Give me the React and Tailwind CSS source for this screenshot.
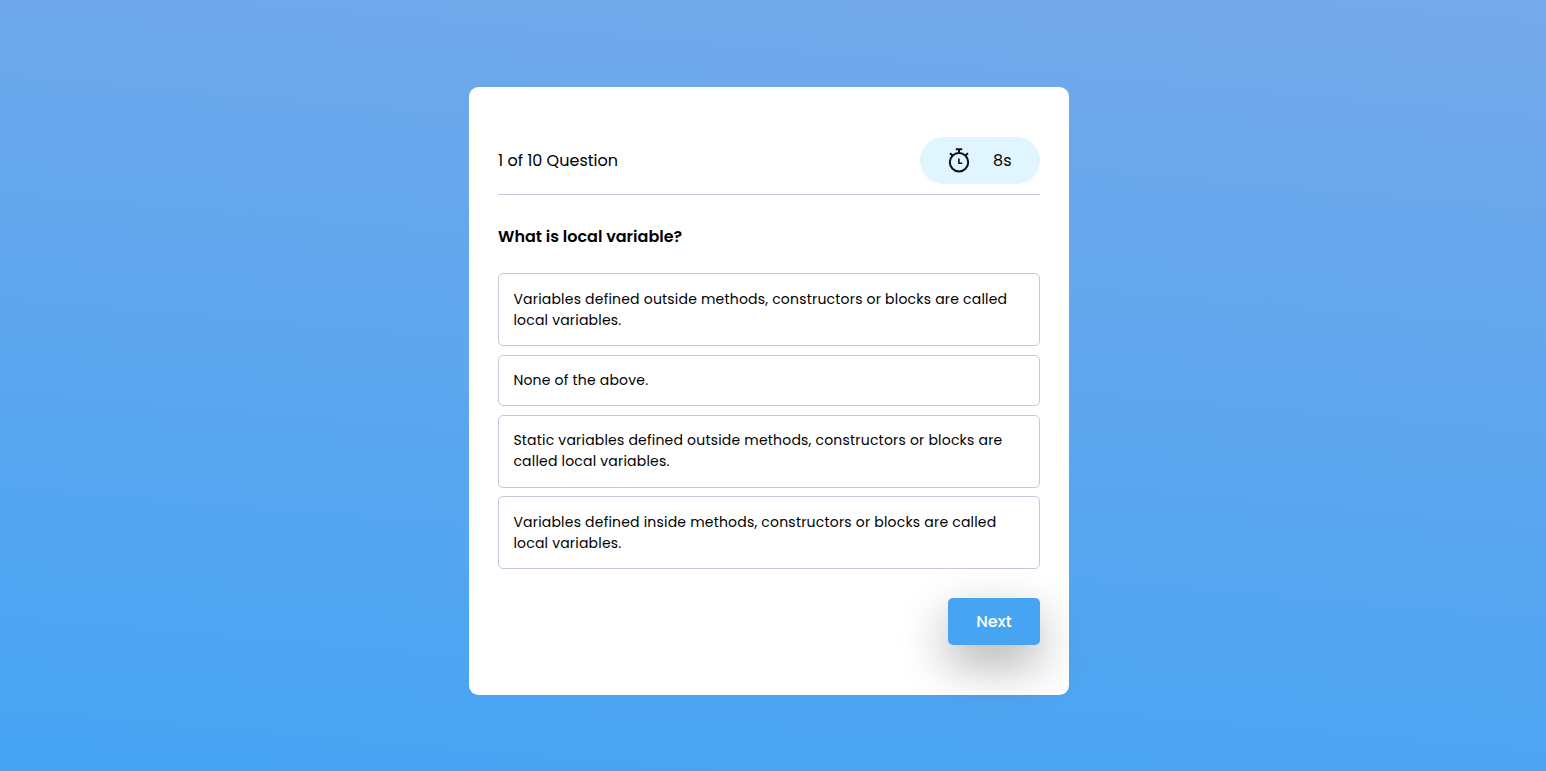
const options = [
  {
    height: "h-[72.8px]",
    lines: ["Variables defined outside methods, constructors or blocks are called", "local variables."],
  },
  { height: "h-[51.2px]", lines: ["None of the above."] },
  {
    height: "h-[72.8px]",
    lines: ["Static variables defined outside methods, constructors or blocks are", "called local variables."],
  },
  {
    height: "h-[72.8px]",
    lines: ["Variables defined inside methods, constructors or blocks are called", "local variables."],
  },
];

function Stopwatch() {
  return (
    <svg className="-mt-px" width="22" height="26" viewBox="0 0 22 26" fill="none" stroke="#0c1013" strokeWidth="2">
      <circle cx="11" cy="15.2" r="9.2" />
      <path d="M7.8 2.3h6.4M11 2.5v4M2 6.2l2.6 2.2M20 6.2l-2.6 2.2" />
      <path d="M10.9 11.4v4.9h3.4" strokeWidth="1.6" />
    </svg>
  );
}

export default function App() {
  return (
    <div className="flex h-[771px] w-full justify-center bg-[linear-gradient(5deg,#46a4f3_1%,#75a9ea_100%)] pr-2 pt-[87px] font-['Poppins','Inter',sans-serif] text-black">
      <main className="h-[608px] w-[600px] rounded-[9.6px] bg-white px-[29px] pt-[50px]">
        <header className="flex h-[58px] items-start justify-between border-b border-[#c8c6d9]">
          <div className="flex h-[47px] items-center whitespace-nowrap text-base">1 of 10 Question</div>
          <div className="flex h-[47px] w-[120px] items-center justify-between rounded-full bg-[#e1f5fe] pl-7 pr-[28.5px]">
            <Stopwatch />
            <span>8s</span>
          </div>
        </header>
        <h1 className="mt-[30px] h-6 whitespace-nowrap text-base font-semibold leading-6">What is local variable?</h1>
        <div className="mt-[24.2px] flex h-[296px] flex-col justify-between">
          {options.map((option, i) => (
            <button
              key={i}
              className={`flex w-full shrink-0 flex-col justify-center rounded-[5px] border border-[#c8c6d9] px-[14.4px] text-left text-sm font-normal leading-[21px] tracking-[0.2px] ${option.height}`}
            >
              {option.lines.map((text) => (
                <span key={text} className="whitespace-nowrap">{text}</span>
              ))}
            </button>
          ))}
        </div>
        <div className="mt-[28.8px] flex justify-end">
          <button className="h-[47px] w-[92px] rounded-[5px] bg-[#46a4f3] pt-px text-base font-medium text-white shadow-[0_19px_48px_rgba(0,0,0,0.32)]">
            Next
          </button>
        </div>
      </main>
    </div>
  );
}
